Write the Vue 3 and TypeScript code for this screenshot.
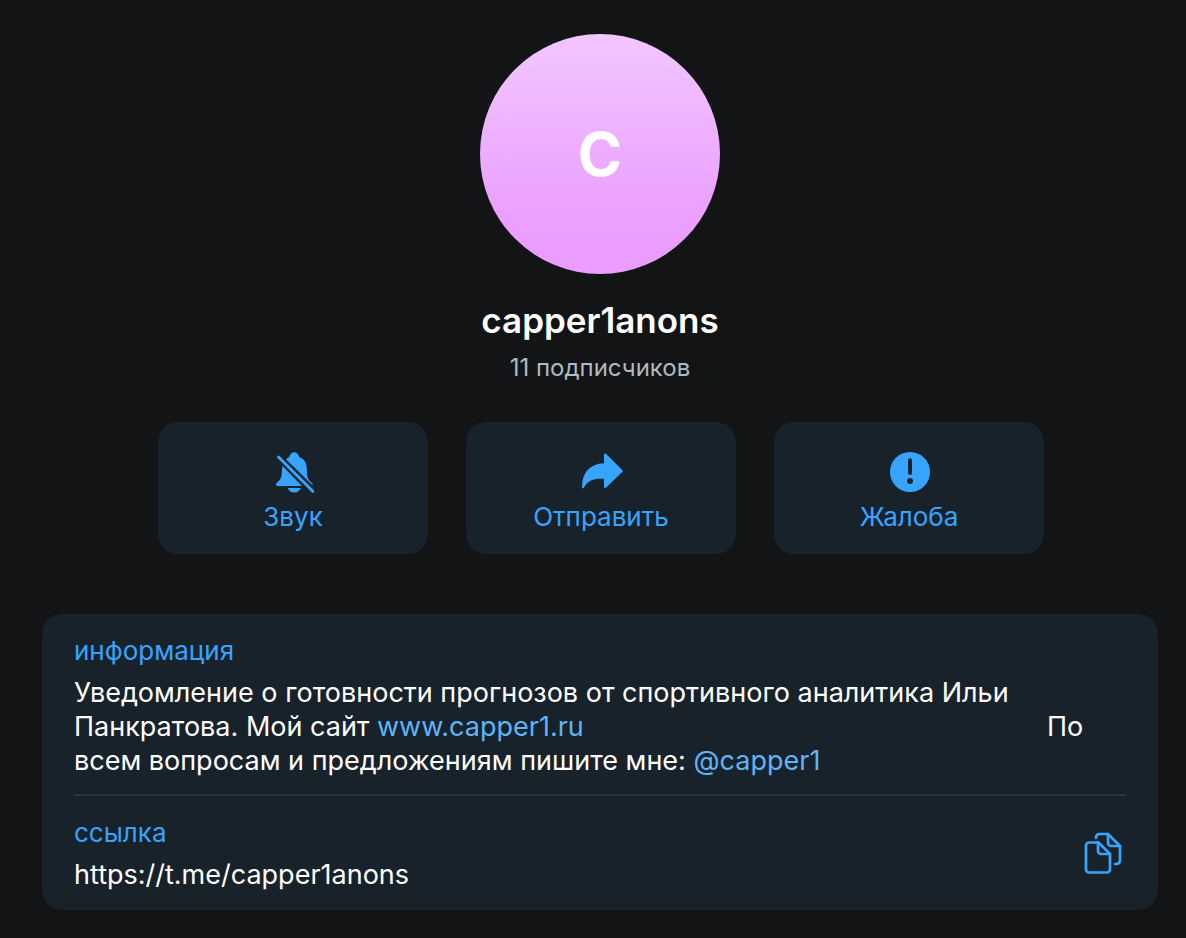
<script setup lang="ts">
interface Action {
  id: 'mute' | 'share' | 'report'
  label: string
}

const actions: Action[] = [
  { id: 'mute', label: 'Звук' },
  { id: 'share', label: 'Отправить' },
  { id: 'report', label: 'Жалоба' },
]

const title = 'capper1anons'
const link = 'https://t.me/capper1anons'
// The channel description keeps the author's long run of spaces.
const spaces = ' '.repeat(61)

function copyLink(): void {
  void navigator.clipboard?.writeText(link)
}
</script>

<template>
  <main class="profile">
    <header class="head">
      <div class="avatar" aria-hidden="true">C</div>
      <h1 class="name">{{ title }}</h1>
      <p class="members">11 подписчиков</p>
    </header>

    <div class="actions">
      <button v-for="action in actions" :key="action.id" type="button" class="action">
        <svg v-if="action.id === 'mute'" class="icon" viewBox="0 0 44 44" aria-hidden="true">
          <path
            class="fill"
            d="M15 9.200C16.200 8.100 17.300 7.600 18.200 7.300C18.900 4.200 20.700 2.200 23.300 2.200s4.400 2 5.100 5.100c4.500 1.500 7 5 7.300 9.900l.4 7.300c.2 3.500 1.700 5.900 4.600 8.300.9.800 1.100 1.600.8 2.400z"
          />
          <path
            class="fill"
            d="M11.300 15.700 31 36H6.700c-1.800 0-2.400-1.700-1.200-2.800 3.300-2.800 5-5 5.200-8.700z"
          />
          <path class="fill" d="M16.800 38h13c-1 2.800-3.400 4.600-6.500 4.600s-5.500-1.800-6.500-4.600z" />
          <path class="slash" d="M7.500 7 41.800 41.300" />
        </svg>
        <svg v-else-if="action.id === 'share'" class="icon" viewBox="0 0 44 44" aria-hidden="true">
          <path
            class="fill"
            d="M25 4.800c0-1.300 1.300-1.700 2.200-.8l16 15.900c.7.700.7 1.300 0 2L27.200 37.600c-.9.900-2.200.5-2.200-.8v-8C14.500 28.300 8.500 30.500 5 37.600c-.5 1.200-2 1.100-2-.3C3.200 22.500 10.500 13.800 25 13.300z"
          />
        </svg>
        <svg v-else class="icon" viewBox="0 0 44 44" aria-hidden="true">
          <circle class="fill" cx="23" cy="22" r="20" />
          <path class="mark" d="M23 10.300v12.800" />
          <circle class="dot" cx="23" cy="31" r="3" />
        </svg>
        <span>{{ action.label }}</span>
      </button>
    </div>

    <section class="card">
      <div class="about">
        <h2 class="label">информация</h2>
        <p class="text">Уведомление о готовности прогнозов от спортивного аналитика Ильи Панкратова. Мой сайт <a href="http://www.capper1.ru">www.capper1.ru</a>{{ spaces }}По всем вопросам и предложениям пишите мне: <a href="https://t.me/capper1">@capper1</a></p>
      </div>
      <div class="link-row">
        <div>
          <h2 class="label">ссылка</h2>
          <p class="text">{{ link }}</p>
        </div>
        <button type="button" class="copy" aria-label="Скопировать ссылку" @click="copyLink">
          <svg viewBox="1 0 40 44" aria-hidden="true">
            <path d="M6 10.500h9.500L27 22v15.500a3 3 0 0 1-3 3H6a3 3 0 0 1-3-3v-24a3 3 0 0 1 3-3z" />
            <path d="M15 10.500V19a3 3 0 0 0 3 3h9" />
            <path d="M13 6c0-2.500 1-4 3.500-4H25l12 12v14c0 2.500-1.500 4-4 4h-1" />
            <path d="M25 2v9a3 3 0 0 0 3 3h9" />
          </svg>
        </button>
      </div>
    </section>
  </main>
</template>

<style>
body {
  margin: 0;
  background: #121416;
}
</style>

<style scoped>
.profile {
  box-sizing: border-box;
  min-height: 100vh;
  padding: 34px 28px 28px 42px;
  background: #121416;
  color: #fff;
  font-family: Inter, "Liberation Sans", sans-serif;
}

.head {
  display: flex;
  flex-direction: column;
  align-items: center;
}

.avatar {
  display: grid;
  place-items: center;
  width: 240px;
  height: 240px;
  border-radius: 50%;
  background: linear-gradient(#f2c6ff, #eba0ff 75%, #eb9cff);
  font-size: 60px;
  font-weight: 700;
}

.name {
  margin: 24px 0 0;
  font-size: 35px;
  line-height: 44px;
  font-weight: 600;
}

.members {
  margin: 10px 0 0;
  color: #b1b9c2;
  font-size: 24px;
  line-height: 32px;
}

.actions {
  display: grid;
  grid-template-columns: repeat(3, 1fr);
  gap: 38px;
  margin: 38px 114px 60px 116px;
}

.action {
  display: flex;
  flex-direction: column;
  align-items: center;
  gap: 7px;
  padding: 28px 0 21px;
  border: 0;
  border-radius: 20px;
  background: #18222b;
  color: #37a5ff;
  font: inherit;
  font-size: 26px;
  line-height: 32px;
  cursor: pointer;
}

.icon {
  width: 44px;
  height: 44px;
}

.fill {
  fill: currentColor;
}

.slash,
.mark {
  fill: none;
  stroke-linecap: round;
}

.slash {
  stroke: currentColor;
  stroke-width: 3;
}

.mark {
  stroke: #18222b;
  stroke-width: 4;
}

.dot {
  fill: #18222b;
}

.card {
  padding: 19px 32px 18px;
  border-radius: 20px;
  background: #18222b;
}

.about {
  padding-bottom: 16px;
  border-bottom: 2px solid #233341;
}

.label {
  margin: 0 0 7px;
  color: #37a5ff;
  font-size: 26px;
  line-height: 36px;
  font-weight: 400;
}

.text {
  margin: 0;
  font-size: 27px;
  line-height: 34px;
  white-space: pre-wrap;
}

.text a {
  color: #5eb5f7;
  text-decoration: none;
}

.link-row {
  display: flex;
  align-items: center;
  justify-content: space-between;
  padding-top: 19px;
}

.copy {
  padding: 0;
  border: 0;
  background: none;
  color: #37a5ff;
  cursor: pointer;
}

.copy svg {
  display: block;
  width: 44px;
  height: 44px;
  fill: none;
  stroke: currentColor;
  stroke-width: 2.7;
  stroke-linecap: round;
  stroke-linejoin: round;
}
</style>
